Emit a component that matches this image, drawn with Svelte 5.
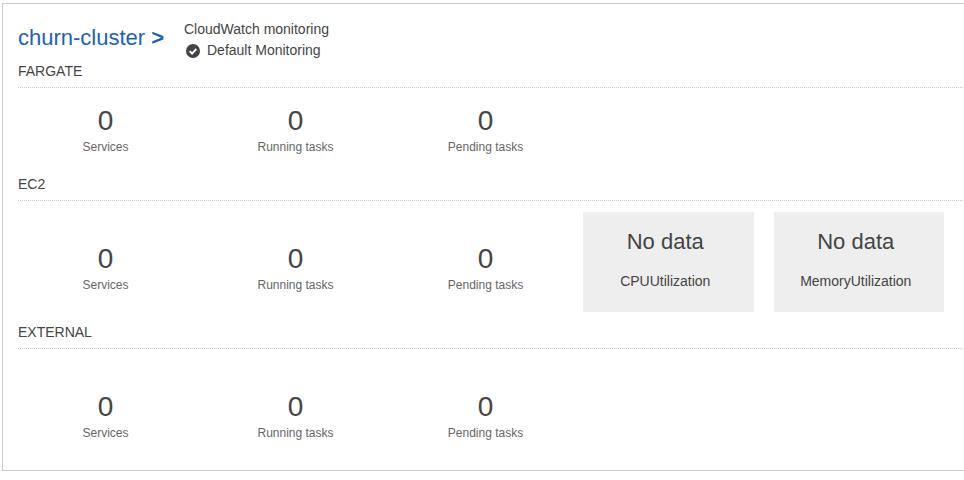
<script lang="ts">
	const stats = ['Services', 'Running tasks', 'Pending tasks'];
	const metrics = ['CPUUtilization', 'MemoryUtilization'];
</script>

<div class="cluster-card">
	<header class="cluster-header">
		<a class="cluster-name" href="#churn">churn-cluster <b>&gt;</b></a>
		<div class="monitoring">
			<div>CloudWatch monitoring</div>
			<div class="monitoring-status">
				<svg viewBox="0 0 16 16" width="14" height="14" aria-hidden="true">
					<circle cx="8" cy="8" r="8" fill="#444" />
					<path d="M4.2 8.2l2.7 2.7 4.9-5.2" fill="none" stroke="#fff" stroke-width="2.2" />
				</svg>
				<span>Default Monitoring</span>
			</div>
		</div>
	</header>

	<h3 class="section-title">FARGATE</h3>
	<div class="stats fargate-stats">
		{#each stats as label}
			<div class="stat">
				<div class="value">0</div>
				<div class="label">{label}</div>
			</div>
		{/each}
	</div>

	<h3 class="section-title">EC2</h3>
	<div class="stats ec2-stats">
		{#each stats as label}
			<div class="stat">
				<div class="value">0</div>
				<div class="label">{label}</div>
			</div>
		{/each}
		<div class="metrics">
			{#each metrics as metric}
				<div class="metric">
					<div class="metric-value">No data</div>
					<div class="metric-name">{metric}</div>
				</div>
			{/each}
		</div>
	</div>

	<h3 class="section-title">EXTERNAL</h3>
	<div class="stats external-stats">
		{#each stats as label}
			<div class="stat">
				<div class="value">0</div>
				<div class="label">{label}</div>
			</div>
		{/each}
	</div>
</div>

<style>
	:global(body) {
		background: #fff;
		overflow: hidden;
		font-family: 'Liberation Sans', Arial, sans-serif;
		color: #444;
	}

	.cluster-card {
		box-sizing: border-box;
		width: 1000px;
		height: 468px;
		margin: 3px 0 0 2px;
		padding: 0 0 0 15px;
		border: 1px solid #ccc;
	}

	.cluster-header {
		display: flex;
		width: 945px;
		height: 55px;
		padding-top: 15px;
		box-sizing: border-box;
	}

	.cluster-name {
		width: 166px;
		margin-top: 5px;
		font-size: 22px;
		line-height: 28px;
		color: #1c62b9;
		text-decoration: none;
	}

	.monitoring {
		font-size: 14px;
		line-height: 21px;
		color: #444;
	}

	.monitoring-status {
		display: flex;
		align-items: center;
		gap: 7px;
		padding-left: 2px;
	}

	.section-title {
		width: 945px;
		margin: 0;
		height: 29px;
		box-sizing: border-box;
		padding-top: 4px;
		border-bottom: 1px dotted #ccc;
		font-size: 14px;
		font-weight: 400;
		line-height: 16px;
		color: #444;
	}

	.stats {
		display: flex;
		box-sizing: border-box;
		margin-left: -7.5px;
	}

	.fargate-stats {
		height: 84px;
		padding-top: 17px;
	}

	.ec2-stats {
		height: 119px;
		padding-top: 11px;
	}

	.ec2-stats .stat {
		padding-top: 31px;
	}

	.external-stats {
		padding-top: 42px;
	}

	.stat {
		width: 190px;
		text-align: center;
	}

	.value {
		font-size: 28px;
		line-height: 32px;
		color: #444;
	}

	.label {
		margin-top: 2px;
		font-size: 12px;
		line-height: 16px;
		color: #666;
	}

	.metrics {
		display: flex;
		gap: 20px;
		margin-left: 2.5px;
	}

	.metric {
		width: 170.5px;
		height: 100px;
		background: #eee;
		text-align: center;
		padding-right: 6px;
		box-sizing: border-box;
	}

	.metric-value {
		margin-top: 17px;
		font-size: 22px;
		line-height: 26px;
		color: #444;
	}

	.metric-name {
		margin-top: 17px;
		font-size: 14px;
		line-height: 18px;
		color: #444;
	}
</style>
